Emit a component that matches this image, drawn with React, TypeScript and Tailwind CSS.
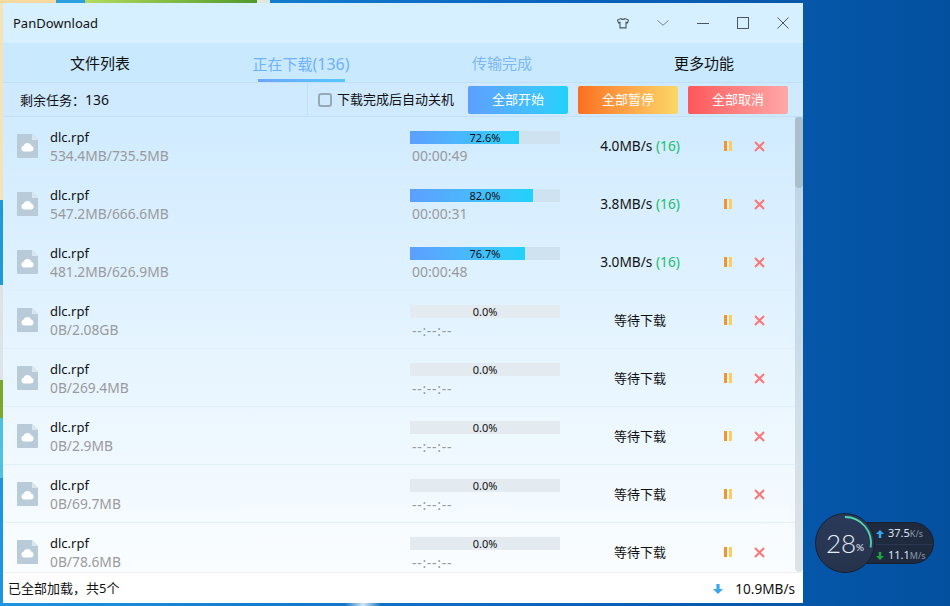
type Task = {
  size: string;
  percent: number;
  time: string;
  speed?: string;
  threads?: number;
};

const tasks: Task[] = [
  { size: "534.4MB/735.5MB", percent: 72.6, time: "00:00:49", speed: "4.0MB/s", threads: 16 },
  { size: "547.2MB/666.6MB", percent: 82.0, time: "00:00:31", speed: "3.8MB/s", threads: 16 },
  { size: "481.2MB/626.9MB", percent: 76.7, time: "00:00:48", speed: "3.0MB/s", threads: 16 },
  { size: "0B/2.08GB", percent: 0, time: "--:--:--" },
  { size: "0B/269.4MB", percent: 0, time: "--:--:--" },
  { size: "0B/2.9MB", percent: 0, time: "--:--:--" },
  { size: "0B/69.7MB", percent: 0, time: "--:--:--" },
  { size: "0B/78.6MB", percent: 0, time: "--:--:--" }
];

function FileIcon() {
  return (
    <svg width="21" height="24" viewBox="0 0 21 24" className="shrink-0">
      <path d="M1 0h14l6 6v17a1 1 0 0 1-1 1H1a1 1 0 0 1-1-1V1a1 1 0 0 1 1-1z" fill="#b9cad8" />
      <path d="M15 0l6 6h-6z" fill="#dbe6ee" />
      <path d="M7 17.5a2.9 2.9 0 0 1-.5-5.7 4.2 4.2 0 0 1 8 0 2.9 2.9 0 0 1-.5 5.7z" fill="#fff" />
    </svg>
  );
}

function SolidArrow({ className, up = false, size = 10 }: { className: string; up?: boolean; size?: number }) {
  return (
    <svg width={size} height={size} viewBox="0 0 10 10" className={`shrink-0 ${className}`} fill="currentColor">
      <path d={up ? "M5 0l5 5H6.6v5H3.4V5H0z" : "M5 10L0 5h3.4V0h3.2v5H10z"} />
    </svg>
  );
}

function TaskRow({ task }: { task: Task }) {
  const waiting = task.percent === 0;
  return (
    <div className="flex h-[58px] shrink-0 border-b border-[#dfeef9]/80">
      <div className="ml-[14px] flex w-[33px] items-center">
        <FileIcon />
      </div>
      <div className="w-[360px] pt-[10px]">
        <p className="text-[13px] leading-5 text-[#111]">dlc.rpf</p>
        <p className="-mt-[1px] text-[13.8px] leading-5 text-[#9a9a9a]">{task.size}</p>
      </div>
      <div className="w-[150px] pt-[14px]">
        <div className={waiting ? "relative h-[13px] bg-[#e3eaf0]" : "relative h-[13px] bg-[#cfe2ef]"}>
          <div
            className="h-full bg-gradient-to-r from-[#5c9fff] to-[#1fd2fb]"
            style={{ width: `${task.percent}%` }}
          />
          <span className="absolute inset-0 text-center text-[11px] leading-[13px] text-[#111]">
            {task.percent.toFixed(1)}%
          </span>
        </div>
        <p
          className={
            waiting
              ? "mt-[3px] pl-[2px] text-sm leading-5 tracking-[0.7px] text-[#9a9a9a]"
              : "mt-[2px] pl-[2px] text-sm leading-5 text-[#9a9a9a]"
          }
        >
          {task.time}
        </p>
      </div>
      <div className="flex w-[160px] items-center justify-center pt-[2px] text-[#111]">
        {task.speed ? (
          <span className="text-[13.7px]">
            {task.speed} <span className="text-[#19be6b]">({task.threads})</span>
          </span>
        ) : (
          <span className="text-[13px]">等待下载</span>
        )}
      </div>
      <div className="flex items-center pt-[1px]">
        <div className="ml-[4px] flex h-[10px] w-[8px] justify-between">
          <span className="w-[3px] bg-[#f7932e]" />
          <span className="w-[3px] bg-[#fbcf5e]" />
        </div>
        <svg width="11" height="11" viewBox="0 0 11 11" className="ml-[22px]">
          <path d="M1 1l9 9M10 1l-9 9" stroke="#ff7474" strokeWidth="2" />
        </svg>
      </div>
    </div>
  );
}

function WindowControls() {
  return (
    <div className="mr-[14px] flex items-center gap-[28px] text-[#4b5661]">
      <svg width="12" height="11" viewBox="0 0 12 11" fill="none" stroke="currentColor" strokeWidth="1.1">
        <path d="M4 .6C4.6 1.6 7.4 1.6 8 .6l3.4 1.5-.8 2.6-1.6-.5v5.7H3V4.2l-1.6.5L.6 2.1z" />
      </svg>
      <svg width="12" height="6" viewBox="0 0 12 6" fill="none" stroke="currentColor" strokeWidth="1" className="opacity-70">
        <path d="M.5.5 6 5.2 11.5.5" />
      </svg>
      <svg width="12" height="12" viewBox="0 0 12 12" fill="none" stroke="currentColor" strokeWidth="1">
        <path d="M0 6.5h12" />
      </svg>
      <svg width="12" height="12" viewBox="0 0 12 12" fill="none" stroke="currentColor" strokeWidth="1">
        <rect x=".5" y=".5" width="11" height="11" />
      </svg>
      <svg width="12" height="12" viewBox="0 0 12 12" fill="none" stroke="currentColor" strokeWidth="1">
        <path d="M.5.5l11 11M11.5.5l-11 11" />
      </svg>
    </div>
  );
}

function NetWidget() {
  return (
    <div className="absolute left-[815px] top-[513px] h-[60px] w-[120px]">
      <div className="absolute left-[40px] top-[9px] flex h-[42px] w-[79px] flex-col rounded-r-[21px] border border-[#17202f] bg-[#1f2a3f] pl-[20px] text-[11px] leading-[20px] text-[#dfe7f2]">
        <div className="flex items-center gap-[4px] border-b border-[#2a3750]">
          <SolidArrow up size={8} className="text-[#37a6f0]" />
          <span>
            37.5<span className="text-[9px] text-[#8a97aa]">K/s</span>
          </span>
        </div>
        <div className="flex items-center gap-[4px]">
          <SolidArrow size={8} className="text-[#1fa53f]" />
          <span>
            11.1<span className="text-[9px] text-[#8a97aa]">M/s</span>
          </span>
        </div>
      </div>
      <div className="absolute left-0 top-0 flex h-[60px] w-[60px] items-center justify-center rounded-full border border-[#17202f] bg-gradient-to-b from-[#2b3a5a] to-[#26334c] font-['Lato',sans-serif] text-[26px] font-light text-[#e6ecf5]">
        28<span className="mt-[8px] text-[10px] font-normal">%</span>
      </div>
      <svg width="60" height="60" viewBox="0 0 60 60" fill="none" className="absolute left-0 top-0">
        <path d="M30 4a26 26 0 0 1 25.6 30.5" stroke="#4fd8b0" strokeWidth="1.8" />
      </svg>
    </div>
  );
}

export default function App() {
  return (
    <div className="relative flex h-[606px] w-[950px] flex-col overflow-hidden bg-gradient-to-r from-[#1e95e0] via-[#0a62bc] via-60% to-[#03509f] font-['Noto_Sans','Noto_Sans_CJK_SC',sans-serif]">
      <div className="flex h-[3px] shrink-0">
        <div className="w-[56px] bg-[#f8d9a0]" />
        <div className="w-[29px] bg-[#2b9fe0]" />
        <div className="w-[172px] bg-gradient-to-r from-[#b4dc5c] to-[#4f9a2c]" />
        <div className="w-[13px] bg-[#dfe8dc]" />
      </div>
      <div className="flex min-h-0 flex-1">
        <div className="flex w-[3px] shrink-0 flex-col">
          <div className="h-[197px] bg-[#f5e2b5]" />
          <div className="h-[85px] bg-[#1e9ad8]" />
          <div className="h-[95px] bg-[#dfe3e6]" />
          <div className="h-[38px] bg-[#7aa82a]" />
          <div className="h-[60px] bg-[#4fc1e0]" />
        </div>
        <main className="flex h-[600px] w-[800px] shrink-0 flex-col bg-white text-[#111]">
          <header className="flex h-[40px] shrink-0 items-center justify-between bg-[#d7f0ff] pl-[10px]">
            <span className="pt-[2px] text-[13px]">PanDownload</span>
            <WindowControls />
          </header>

          <nav className="grid h-[40px] shrink-0 grid-cols-[194px_208px_194px_204px] border-b border-[#bfe0f7] bg-[#c9e9ff] pt-[2px] text-[15px]">
            <div className="flex items-center justify-center">文件列表</div>
            <div className="relative flex items-center justify-center text-[#6fb1ff]">
              <span>
                正在下载<span className="text-base">(136)</span>
              </span>
              <span className="absolute bottom-0 left-[61px] h-[3px] w-[87px] bg-gradient-to-r from-[#6da4ff] to-[#55c8ff]" />
            </div>
            <div className="flex items-center justify-center text-[#7db8f5]">传输完成</div>
            <div className="flex items-center justify-center pl-[6px]">更多功能</div>
          </nav>

          <div className="flex h-[34px] shrink-0 items-center border-b border-[#c2e1f6] bg-[#cfeaff] text-[13px]">
            <span className="ml-[17px] w-[287px] pt-[2px]">
              剩余任务：<span className="text-sm">136</span>
            </span>
            <div className="flex h-full items-center border-l border-[#c2e1f6] pl-[10px]">
              <span className="h-[14px] w-[14px] rounded-[3px] border-2 border-[#9aa8b4]" />
              <span className="ml-[5px]">下载完成后自动关机</span>
            </div>
            <div className="ml-[14px] flex gap-[10px] text-white">
              <button className="h-[28px] w-[100px] rounded-[2px] bg-gradient-to-r from-[#5c9fff] to-[#1fd2fb]">全部开始</button>
              <button className="h-[28px] w-[100px] rounded-[2px] bg-gradient-to-r from-[#fb6f1f] to-[#fbd768]">全部暂停</button>
              <button className="h-[28px] w-[100px] rounded-[2px] bg-gradient-to-r from-[#ff5558] to-[#ffa7a9]">全部取消</button>
            </div>
          </div>

          <div className="flex min-h-0 flex-1 bg-gradient-to-b from-[#d0ebff] to-[#fafdff]">
            <div className="min-w-0 flex-1 overflow-hidden">
              {tasks.map((task, index) => (
                <TaskRow key={index} task={task} />
              ))}
            </div>
            <div className="w-[8px] shrink-0 rounded-b-[4px] bg-[#1f3a4d]/[0.13]">
              <div className="h-[71px] rounded-[4px] bg-[#a9bfcc]" />
            </div>
          </div>

          <footer className="flex h-[31px] shrink-0 items-center justify-between border-t border-[#eef2f5] bg-white pl-[5px] pr-[8px] pt-[2px] text-[13px]">
            <span>已全部加载，共5个</span>
            <span className="flex items-center gap-[12px] text-[13.6px]">
              <SolidArrow className="text-[#3aa8ee]" />
              10.9MB/s
            </span>
          </footer>
        </main>
      </div>
      <div className="h-[3px] shrink-0 pl-[345px]">
        <div className="h-full w-[36px] bg-gradient-to-r from-transparent via-[#d8e6f2] to-transparent" />
      </div>
      <NetWidget />
    </div>
  );
}
